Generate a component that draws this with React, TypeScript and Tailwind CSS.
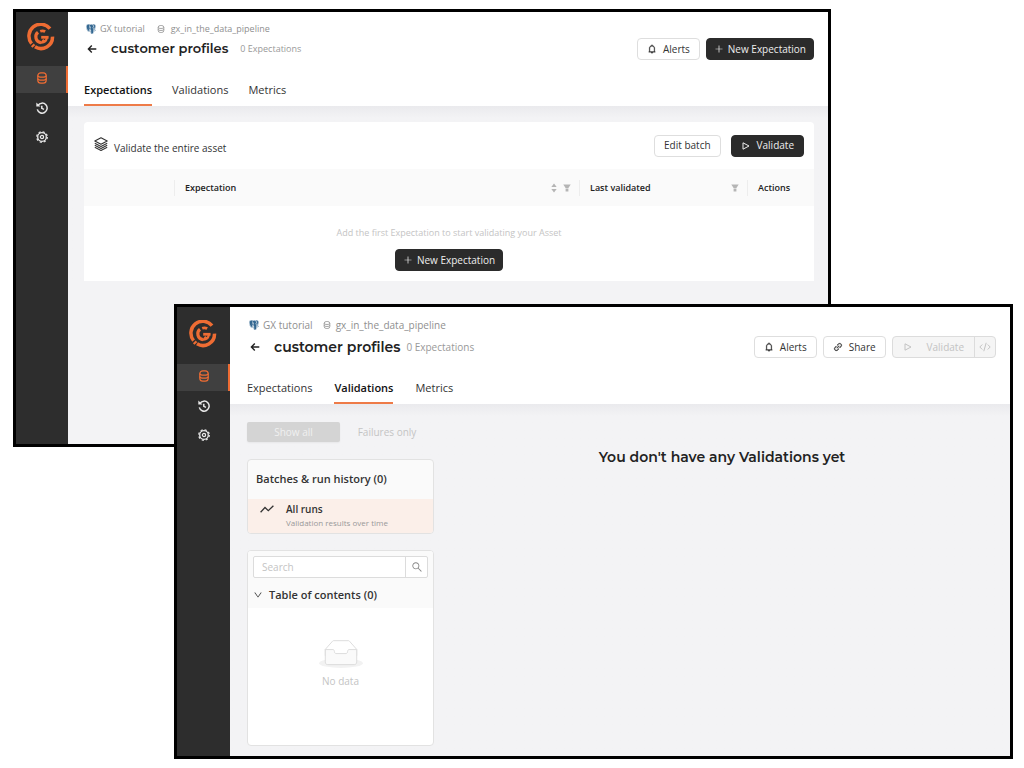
import type { ReactNode } from "react";
import {
  AiOutlineBell,
  AiOutlineDown,
  AiOutlineLink,
  AiOutlinePlus,
  AiOutlineSearch,
} from "react-icons/ai";
import { BiLogoPostgresql } from "react-icons/bi";

const ui = "font-['Open_Sans','Noto_Sans',sans-serif]";
const display = "font-['Montserrat','Inter',sans-serif] font-semibold";

type Density = "compact" | "regular";

function Logo() {
  return (
    <svg viewBox="0 0 28 28" className="size-7" fill="none" stroke="#ee6c33" aria-label="GX">
      <path d="M23 5.600A11.500 11.500 0 0 0 4.600 20.600" strokeWidth="3.500" />
      <path d="M25.500 13.600A11.500 11.500 0 0 1 8 23.800" strokeWidth="3.500" />
      <path d="M4.700 24l2.800-2.600" strokeWidth="2.200" />
      <path d="M18.200 8.600A6 6 0 0 0 13.200 8.300" strokeWidth="2.800" />
      <path d="M11 9.300A5.800 5.800 0 0 0 13.800 19.600" strokeWidth="3.200" />
      <path d="M14.200 14.300H21.600" strokeWidth="2.800" />
      <path d="M19.900 15A6 6 0 0 1 14.600 19.700L17 16.600" strokeWidth="2.200" />
    </svg>
  );
}

function DatabaseIcon({ className }: { className: string }) {
  return (
    <svg viewBox="0 0 12 12" className={className} fill="none" stroke="currentColor" strokeWidth="1.2">
      <rect x="1.800" y=".8" width="8.400" height="10.400" rx="3" />
      <path d="M1.800 3.500c0 1.200 1.800 1.700 4.200 1.700s4.200-.5 4.200-1.700M1.800 6.500c0 1.200 1.800 1.700 4.200 1.700s4.200-.5 4.200-1.700" />
    </svg>
  );
}

function HistoryIcon() {
  return (
    <svg viewBox="0 0 12 12" className="size-3" fill="none" stroke="currentColor" strokeWidth="1.5">
      <path d="M2 3.300A5 5 0 1 1 1.300 7.400M5.800 3.800V6.300L8 7.400" />
      <path d="M.3.400v4.200h4.200z" fill="currentColor" stroke="none" />
    </svg>
  );
}

function GearIcon() {
  return (
    <svg viewBox="0 0 12 12" className="size-3" fill="none" stroke="currentColor">
      <circle cx="6" cy="6" r="4.300" strokeWidth="1.300" />
      <circle cx="6" cy="6" r="1.600" strokeWidth="1.300" />
      <circle cx="6" cy="6" r="5.300" strokeWidth="1.200" strokeDasharray="2.160 2" />
    </svg>
  );
}

function LayersIcon() {
  return (
    <svg viewBox="0 0 14 14" className="size-3.5" fill="none" stroke="#333" strokeWidth="1.1" strokeLinejoin="round">
      <path d="M7 .8l6.200 3.200L7 7.200.8 4z" />
      <path d="M.8 6.300L7 9.400l6.200-3.100M.8 8.300L7 11.400l6.200-3.100M.8 10.300L7 13.400l6.200-3.100" />
    </svg>
  );
}

function PlayIcon() {
  return (
    <svg viewBox="0 0 10 10" className="size-2.5" fill="none" stroke="currentColor" strokeLinejoin="round">
      <path d="M2 1.800v6.400L8 5z" />
    </svg>
  );
}

function CodeIcon() {
  return (
    <svg viewBox="0 0 12 12" className="size-3" fill="none" stroke="currentColor">
      <path d="M3.300 3.500L.8 6l2.500 2.500M8.700 3.500L11.200 6 8.700 8.500M7.200 1.800L4.800 10.200" />
    </svg>
  );
}

function BackIcon() {
  return (
    <svg viewBox="0 0 10 10" className="size-2.5" fill="none" stroke="#222" strokeWidth="1.4">
      <path d="M9.300 5H1.500M4.800 1.500L1.400 5l3.400 3.500" />
    </svg>
  );
}

function FilterIcon() {
  return (
    <svg viewBox="0 0 8 8" className="size-2" fill="#b5b5b5">
      <path d="M.3.500h7.400L5.400 4H2.600zM2.600 4.600h2.800v2.900H2.600z" />
    </svg>
  );
}

function SorterIcon() {
  return (
    <svg viewBox="0 0 6 10" className="h-2.5 w-1.5" fill="#b5b5b5">
      <path d="M3 .500L5.700 4H.3zM3 9.500L.3 6h5.400z" />
    </svg>
  );
}

function TrendIcon() {
  return (
    <svg viewBox="0 0 14 8" className="h-2 w-3.5" fill="none" stroke="#333" strokeWidth="1.300">
      <path d="M.6 7.200L5 2.500l3.300 3.200L13.400.7" />
    </svg>
  );
}

function EmptyIcon() {
  return (
    <svg viewBox="0 0 64 41" className="h-7 w-11">
      <g transform="translate(0 1)" fill="none">
        <ellipse fill="#f2f2f2" cx="32" cy="33" rx="32" ry="7" />
        <g stroke="#d9d9d9" strokeWidth="1.300">
          <path fill="#fff" d="M55 12.760L44.854 1.258C44.367.474 43.656 0 42.907 0H21.093c-.749 0-1.460.474-1.947 1.257L9 12.761V22h46v-9.240z" />
          <path fill="#fafafa" d="M41.613 15.931c0-1.605.994-2.930 2.227-2.931H55v18.137C55 33.260 53.680 35 52.050 35h-40.100C10.320 35 9 33.259 9 31.137V13h11.160c1.233 0 2.227 1.323 2.227 2.928v.022c0 1.605 1.005 2.901 2.237 2.901h14.752c1.232 0 2.237-1.308 2.237-2.913v-.007z" />
        </g>
      </g>
    </svg>
  );
}

function Sidebar({ density }: { density: Density }) {
  const compact = density === "compact";
  return (
    <nav
      aria-label="Main"
      className={`${compact ? "w-[52px]" : "w-[53px]"} flex shrink-0 flex-col bg-[#2d2d2d] text-[#e8e8e8]`}
    >
      <div className={`${compact ? "h-[54px]" : "h-[57px]"} flex items-center justify-center pr-0.5 pb-1`}>
        <Logo />
      </div>
      <a
        href="#assets"
        aria-label="Data assets"
        className="flex h-[27px] items-center justify-center border-r-2 border-[#ee6c33] bg-[#404040] pb-1 pl-0.5 text-[#ee6c33]"
      >
        <DatabaseIcon className="size-3" />
      </a>
      <a href="#activity" aria-label="Activity" className="flex h-[29px] items-center justify-center">
        <HistoryIcon />
      </a>
      <a href="#settings" aria-label="Settings" className="flex h-[30px] items-center justify-center">
        <GearIcon />
      </a>
    </nav>
  );
}

const buttonStyles = {
  dark: "bg-[#2b2b2b] border-[#2b2b2b] text-[#eee]",
  light: "bg-white border-[#dedede] text-[#333]",
};

function Button({
  children,
  tone = "light",
  density = "regular",
}: {
  children: ReactNode;
  tone?: keyof typeof buttonStyles;
  density?: Density;
}) {
  return (
    <button
      type="button"
      className={`${buttonStyles[tone]} ${density === "compact" ? "gap-1 px-[7px]" : "gap-1.5 px-[9px]"} flex h-[22px] items-center rounded border text-[10px]`}
    >
      {children}
    </button>
  );
}

function NewExpectationButton() {
  return (
    <Button tone="dark" density="compact">
      <AiOutlinePlus className="size-2.5" />
      New Expectation
    </Button>
  );
}

function AlertsButton() {
  return (
    <Button>
      <AiOutlineBell className="size-2.5" strokeWidth="35" />
      Alerts
    </Button>
  );
}

const tabs = ["Expectations", "Validations", "Metrics"];

function Header({ active, actions, density }: { active: string; actions: ReactNode; density: Density }) {
  const compact = density === "compact";
  const small = compact ? "text-[9px]" : "text-[10px]";
  return (
    <header className={`${compact ? "pt-2.5 pl-4" : "pt-[11px] pl-[17px]"} flex flex-col bg-white pr-3.5`}>
      <div className={`${small} flex h-3.5 items-center text-[#8f8f8f]`}>
        <BiLogoPostgresql className="ml-px size-3 text-[#336791]" />
        <span className="ml-[3px]">GX tutorial</span>
        <DatabaseIcon className={`${compact ? "ml-3" : "ml-2.5"} size-2`} />
        <span className={compact ? "ml-1.5" : "ml-[5px]"}>gx_in_the_data_pipeline</span>
      </div>
      <div className={`${compact ? "mt-0.5" : "mt-1"} flex h-[22px] items-center justify-between`}>
        <div className="flex items-center">
          <button type="button" aria-label="Back" className="ml-[3px]">
            <BackIcon />
          </button>
          <h1 className={`${display} ${compact ? "text-[13px]" : "text-[14px]"} ml-3.5 text-[#222]`}>customer profiles</h1>
          <span className={`${small} ${compact ? "ml-3" : "ml-1.5"} text-[#999]`}>0 Expectations</span>
        </div>
        <div className="flex gap-1.5">{actions}</div>
      </div>
      <div className={`${compact ? "gap-5" : "gap-[22px]"} mt-3.5 flex h-8 text-[11px]`}>
        {tabs.map((tab) => (
          <a
            key={tab}
            href={`#${tab.toLowerCase()}`}
            className={
              tab === active
                ? "flex items-center border-b-2 border-[#ee7b48] pt-0.5 font-semibold text-[#111]"
                : "flex items-center text-[#333]"
            }
          >
            {tab}
          </a>
        ))}
      </div>
    </header>
  );
}

function ColumnHead({ label, children }: { label: string; children?: ReactNode }) {
  return (
    <div className="flex h-4 items-center justify-between border-l border-[#ededed] pr-2 pl-2.5">
      <span>{label}</span>
      <span className="flex items-center gap-1.5">{children}</span>
    </div>
  );
}

function ExpectationsWindow() {
  return (
    <section className="absolute top-[9px] left-[13px] flex h-[438px] w-[818px] border-[3px] border-black bg-[#f3f3f5]">
      <Sidebar density="compact" />
      <div className="min-w-0 grow">
        <Header
          active="Expectations"
          density="compact"
          actions={
            <>
              <AlertsButton />
              <NewExpectationButton />
            </>
          }
        />
        <main className="bg-linear-to-b from-[#eaeaed] to-[#f3f3f5] to-[12px] pt-4 pr-3.5 pl-4">
          <div className="overflow-hidden rounded-t bg-white">
            <div className="flex h-[47px] items-center justify-between px-2.5">
              <div className="flex gap-1.5 text-[10px] text-[#333]">
                <LayersIcon />
                <span className="pt-1 leading-3.5">Validate the entire asset</span>
              </div>
              <div className="flex gap-2.5">
                <Button>Edit batch</Button>
                <Button tone="dark">
                  <PlayIcon />
                  Validate
                </Button>
              </div>
            </div>
            <table className="w-full table-fixed text-[9px]">
              <thead>
                <tr className="h-[37px] bg-[#fafafa] text-left text-[#222]">
                  <th className="w-[90px]" aria-label="Select" />
                  <th className="p-0 font-semibold">
                    <ColumnHead label="Expectation">
                      <SorterIcon />
                      <FilterIcon />
                    </ColumnHead>
                  </th>
                  <th className="w-[168px] p-0 font-semibold">
                    <ColumnHead label="Last validated">
                      <FilterIcon />
                    </ColumnHead>
                  </th>
                  <th className="w-[67px] p-0 font-semibold">
                    <ColumnHead label="Actions" />
                  </th>
                </tr>
              </thead>
              <tbody>
                <tr>
                  <td colSpan={4} className="p-0">
                    <div className="flex h-[75px] flex-col items-center justify-end gap-2.5 pb-2.5">
                      <span className="text-[#c4c4c4]">Add the first Expectation to start validating your Asset</span>
                      <NewExpectationButton />
                    </div>
                  </td>
                </tr>
              </tbody>
            </table>
          </div>
        </main>
      </div>
    </section>
  );
}

function ValidationsWindow() {
  return (
    <section className="absolute top-[304px] left-[174px] flex h-[455px] w-[839px] border-[3px] border-black bg-[#f3f3f5]">
      <Sidebar density="regular" />
      <div className="flex min-w-0 grow flex-col">
        <Header
          active="Validations"
          density="regular"
          actions={
            <>
              <AlertsButton />
              <Button>
                <AiOutlineLink className="size-2.5" strokeWidth="35" />
                Share
              </Button>
              <div className="flex h-[22px] rounded border border-[#dcdcdc] bg-[#f5f5f5] text-[10px] text-[#c3c3c3]">
                <button type="button" disabled className="flex items-center gap-3.5 px-2.5">
                  <PlayIcon />
                  Validate
                </button>
                <button type="button" disabled aria-label="Code" className="flex items-center border-l border-[#dcdcdc] px-1">
                  <CodeIcon />
                </button>
              </div>
            </>
          }
        />
        <main className="flex grow bg-linear-to-b from-[#eaeaed] to-[#f3f3f5] to-[12px] pb-2.5 pl-[17px]">
          <div className="flex w-[187px] shrink-0 flex-col pt-[18px]">
            <div className="flex h-5 text-[10px]">
              <button type="button" disabled className="w-[93px] rounded-xs bg-[#d4d4d4] text-[#f0f0f0] shadow-xs">
                Show all
              </button>
              <button type="button" disabled className="grow text-[#c4c4c4]">
                Failures only
              </button>
            </div>
            <div className="mt-[17px] overflow-hidden rounded border border-[#e2e2e2] bg-[#fafafa]">
              <h2 className="flex h-[39px] items-center px-2 text-[11px] font-semibold text-[#333]">Batches &amp; run history (0)</h2>
              <a href="#all-runs" className="flex h-[34px] gap-3 bg-[#fbefe9] pl-3">
                <span className="pt-1.5">
                  <TrendIcon />
                </span>
                <span className="flex flex-col">
                  <span className="pt-0.5 text-[10px] leading-4 font-semibold text-[#333]">All runs</span>
                  <span className="text-[8px] leading-3 text-[#999]">Validation results over time</span>
                </span>
              </a>
            </div>
            <div className="mt-4 flex grow flex-col overflow-hidden rounded border border-[#e2e2e2] bg-white">
              <div className="bg-[#fafafa] px-[5px] pt-[5px]">
                <div className="flex h-[22px] overflow-hidden rounded-xs border border-[#dcdcdc] bg-white">
                  <input aria-label="Search" placeholder="Search" className="min-w-0 grow px-2 text-[10px] outline-none placeholder:text-[#c4c4c4]" />
                  <button type="button" aria-label="Run search" className="flex w-[22px] items-center justify-center border-l border-[#dcdcdc] text-[#888]">
                    <AiOutlineSearch className="size-3" />
                  </button>
                </div>
                <button type="button" className="flex h-[30px] items-center gap-1.5 pt-1 text-[11px] font-semibold text-[#333]">
                  <AiOutlineDown className="size-2.5" />
                  Table of contents (0)
                </button>
              </div>
              <div className="flex flex-col items-center pt-8 text-[10px] text-[#c4c4c4]">
                <EmptyIcon />
                <span className="mt-1.5">No data</span>
              </div>
            </div>
          </div>
          <p className={`${display} grow pt-[43px] text-center text-[14px] text-[#222]`}>You don't have any Validations yet</p>
        </main>
      </div>
    </section>
  );
}

export default function App() {
  return (
    <div className={`${ui} relative min-h-screen bg-white`}>
      <ExpectationsWindow />
      <ValidationsWindow />
    </div>
  );
}
